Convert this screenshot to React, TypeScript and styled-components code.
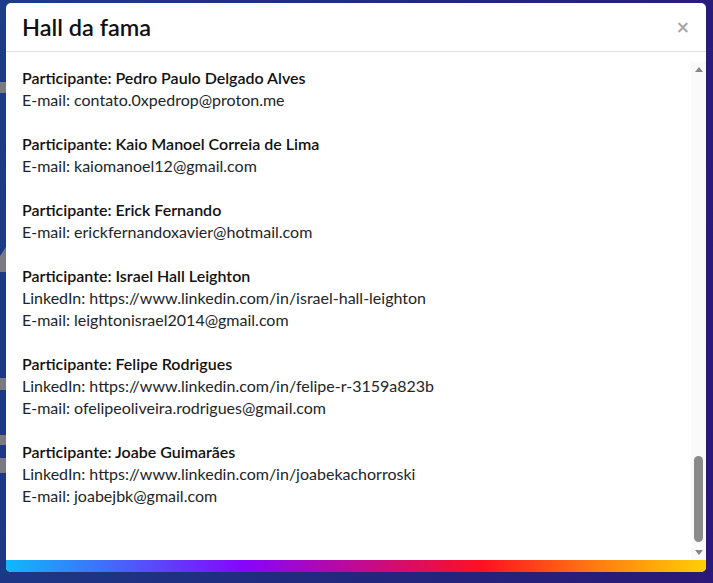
import * as React from "react";
import styled, { createGlobalStyle } from "styled-components";

const GlobalStyle = createGlobalStyle`
  html, body {
    margin: 0;
    height: 100%;
  }
  body {
    font-family: "Lato", "Noto Sans", sans-serif;
    color: #212529;
    overflow: hidden;
  }
`;

type Participant = {
  name: string;
  linkedin?: string;
  email: string;
};

const earlier: Participant[] = [
  "Ana Beatriz Souza", "Bruno Carvalho", "Camila Ferreira", "Daniel Moreira",
  "Eduarda Lopes", "Fábio Nascimento", "Gabriela Pinto", "Henrique Barros",
  "Isabela Rocha", "João Victor Teixeira", "Larissa Mendes", "Lucas Araújo",
  "Mariana Castro", "Matheus Ribeiro", "Natália Gomes", "Otávio Martins",
  "Paula Cardoso", "Rafael Duarte", "Renata Freitas", "Rodrigo Azevedo",
  "Sabrina Nunes", "Thiago Monteiro", "Vanessa Cunha", "Vinícius Ramos",
].map((name, i) => ({
  name,
  linkedin: i % 3 === 0 ? `https://www.linkedin.com/in/${name.toLowerCase().split(" ")[0]}` : undefined,
  email: `${name.toLowerCase().split(" ")[0]}${i}@gmail.com`,
}));

const featured: Participant[] = [
  { name: "Pedro Paulo Delgado Alves", email: "contato.0xpedrop@proton.me" },
  { name: "Kaio Manoel Correia de Lima", email: "kaiomanoel12@gmail.com" },
  { name: "Erick Fernando", email: "erickfernandoxavier@hotmail.com" },
  {
    name: "Israel Hall Leighton",
    linkedin: "https://www.linkedin.com/in/israel-hall-leighton",
    email: "leightonisrael2014@gmail.com",
  },
  {
    name: "Felipe Rodrigues",
    linkedin: "https://www.linkedin.com/in/felipe-r-3159a823b",
    email: "ofelipeoliveira.rodrigues@gmail.com",
  },
  {
    name: "Joabe Guimarães",
    linkedin: "https://www.linkedin.com/in/joabekachorroski",
    email: "joabejbk@gmail.com",
  },
];

const Backdrop = styled.div`
  position: relative;
  height: 100vh;
  box-sizing: border-box;
  padding: 3px 7px 11px 6px;
  background: linear-gradient(100deg, #1b3c88 0%, #22287d 55%, #2c1878 100%);
  display: flex;
`;

const PageShapes = styled.svg`
  position: absolute;
  inset: 0;
  width: 100%;
  height: 100%;
`;

const Modal = styled.div`
  position: relative;
  flex: 1;
  display: flex;
  flex-direction: column;
  background: #fff;
  border-radius: 5px;
  overflow: hidden;
`;

const Header = styled.div`
  height: 48px;
  flex-shrink: 0;
  display: flex;
  align-items: center;
  justify-content: space-between;
  padding: 0 16px;
  border-bottom: 1px solid #dee2e6;
`;

const Title = styled.h5`
  margin: 0;
  font-size: 23.5px;
  font-weight: 600;
  color: #111;
`;

const Close = styled.button`
  border: 0;
  background: none;
  padding: 0;
  font-family: "DejaVu Sans", sans-serif;
  font-size: 17px;
  font-weight: 700;
  line-height: 1;
  color: #000;
  opacity: 0.35;
`;

const BodyRow = styled.div`
  flex: 1;
  min-height: 0;
  display: flex;
`;

const ScrollArea = styled.div`
  flex: 1;
  overflow-y: scroll;
  scrollbar-width: none;
  padding: 16px 16px 31px;

  &::-webkit-scrollbar {
    display: none;
  }
`;

/* scrollbar rail drawn beside the list */
const Rail = styled.div`
  width: 15px;
  margin-top: 10px;
  flex-shrink: 0;
  display: flex;
  flex-direction: column;
  align-items: center;
  background: #fafafa;
`;

const RailButton = styled.div<{ $down?: boolean }>`
  height: 15px;
  flex-shrink: 0;
  display: flex;
  align-items: center;
  justify-content: center;

  &::before {
    content: "";
    border-left: 4.5px solid transparent;
    border-right: 4.5px solid transparent;
    ${(p) => (p.$down ? "border-top" : "border-bottom")}: 5px solid #868686;
  }
`;

const RailTrack = styled.div`
  flex: 1;
  display: flex;
  flex-direction: column;
  justify-content: flex-end;
  padding: 0 0 3px;
`;

const Thumb = styled.div`
  width: 9px;
  height: 86px;
  border-radius: 5px;
  background: #8a8a8a;
`;

const Entry = styled.p`
  margin: 0 0 22px;
  font-size: 16px;
  line-height: 22px;
`;

const Name = styled.strong`
  display: block;
  font-weight: 600;
  color: #111;
`;

const Line = styled.span`
  display: block;
`;

const Stripe = styled.div`
  height: 12px;
  flex-shrink: 0;
  background: linear-gradient(90deg, #0fb8fa 0%, #8605fb 34%, #ff1020 68%, #ff7a12 84%, #ffcf05 100%);
`;

export default function App() {
  const listRef = React.useRef<HTMLDivElement>(null);

  React.useLayoutEffect(() => {
    const el = listRef.current;
    if (el) el.scrollTop = el.scrollHeight;
  }, []);

  return (
    <>
      <GlobalStyle />
      <Backdrop>
        <PageShapes viewBox="0 0 713 583" preserveAspectRatio="none">
          <rect x="0" y="82" width="8" height="11" fill="#7a7a80" />
          <polygon points="0,272 0,256 8,244 8,272" fill="#7a7a80" />
          <rect x="0" y="378" width="8" height="12" fill="#7a7a80" />
          <rect x="0" y="435" width="8" height="10" fill="#7a7a80" />
          <rect x="0" y="458" width="8" height="15" fill="#7a7a80" />
        </PageShapes>
        <Modal>
          <Header>
            <Title>Hall da fama</Title>
            <Close aria-label="Fechar">×</Close>
          </Header>
          <BodyRow>
            <ScrollArea ref={listRef}>
              {[...earlier, ...featured].map((p) => (
                <Entry key={p.name}>
                  <Name>Participante: {p.name}</Name>
                  {p.linkedin && <Line>LinkedIn: {p.linkedin}</Line>}
                  <Line>E-mail: {p.email}</Line>
                </Entry>
              ))}
            </ScrollArea>
            <Rail>
              <RailButton />
              <RailTrack>
                <Thumb />
              </RailTrack>
              <RailButton $down />
            </Rail>
          </BodyRow>
          <Stripe />
        </Modal>
      </Backdrop>
    </>
  );
}
